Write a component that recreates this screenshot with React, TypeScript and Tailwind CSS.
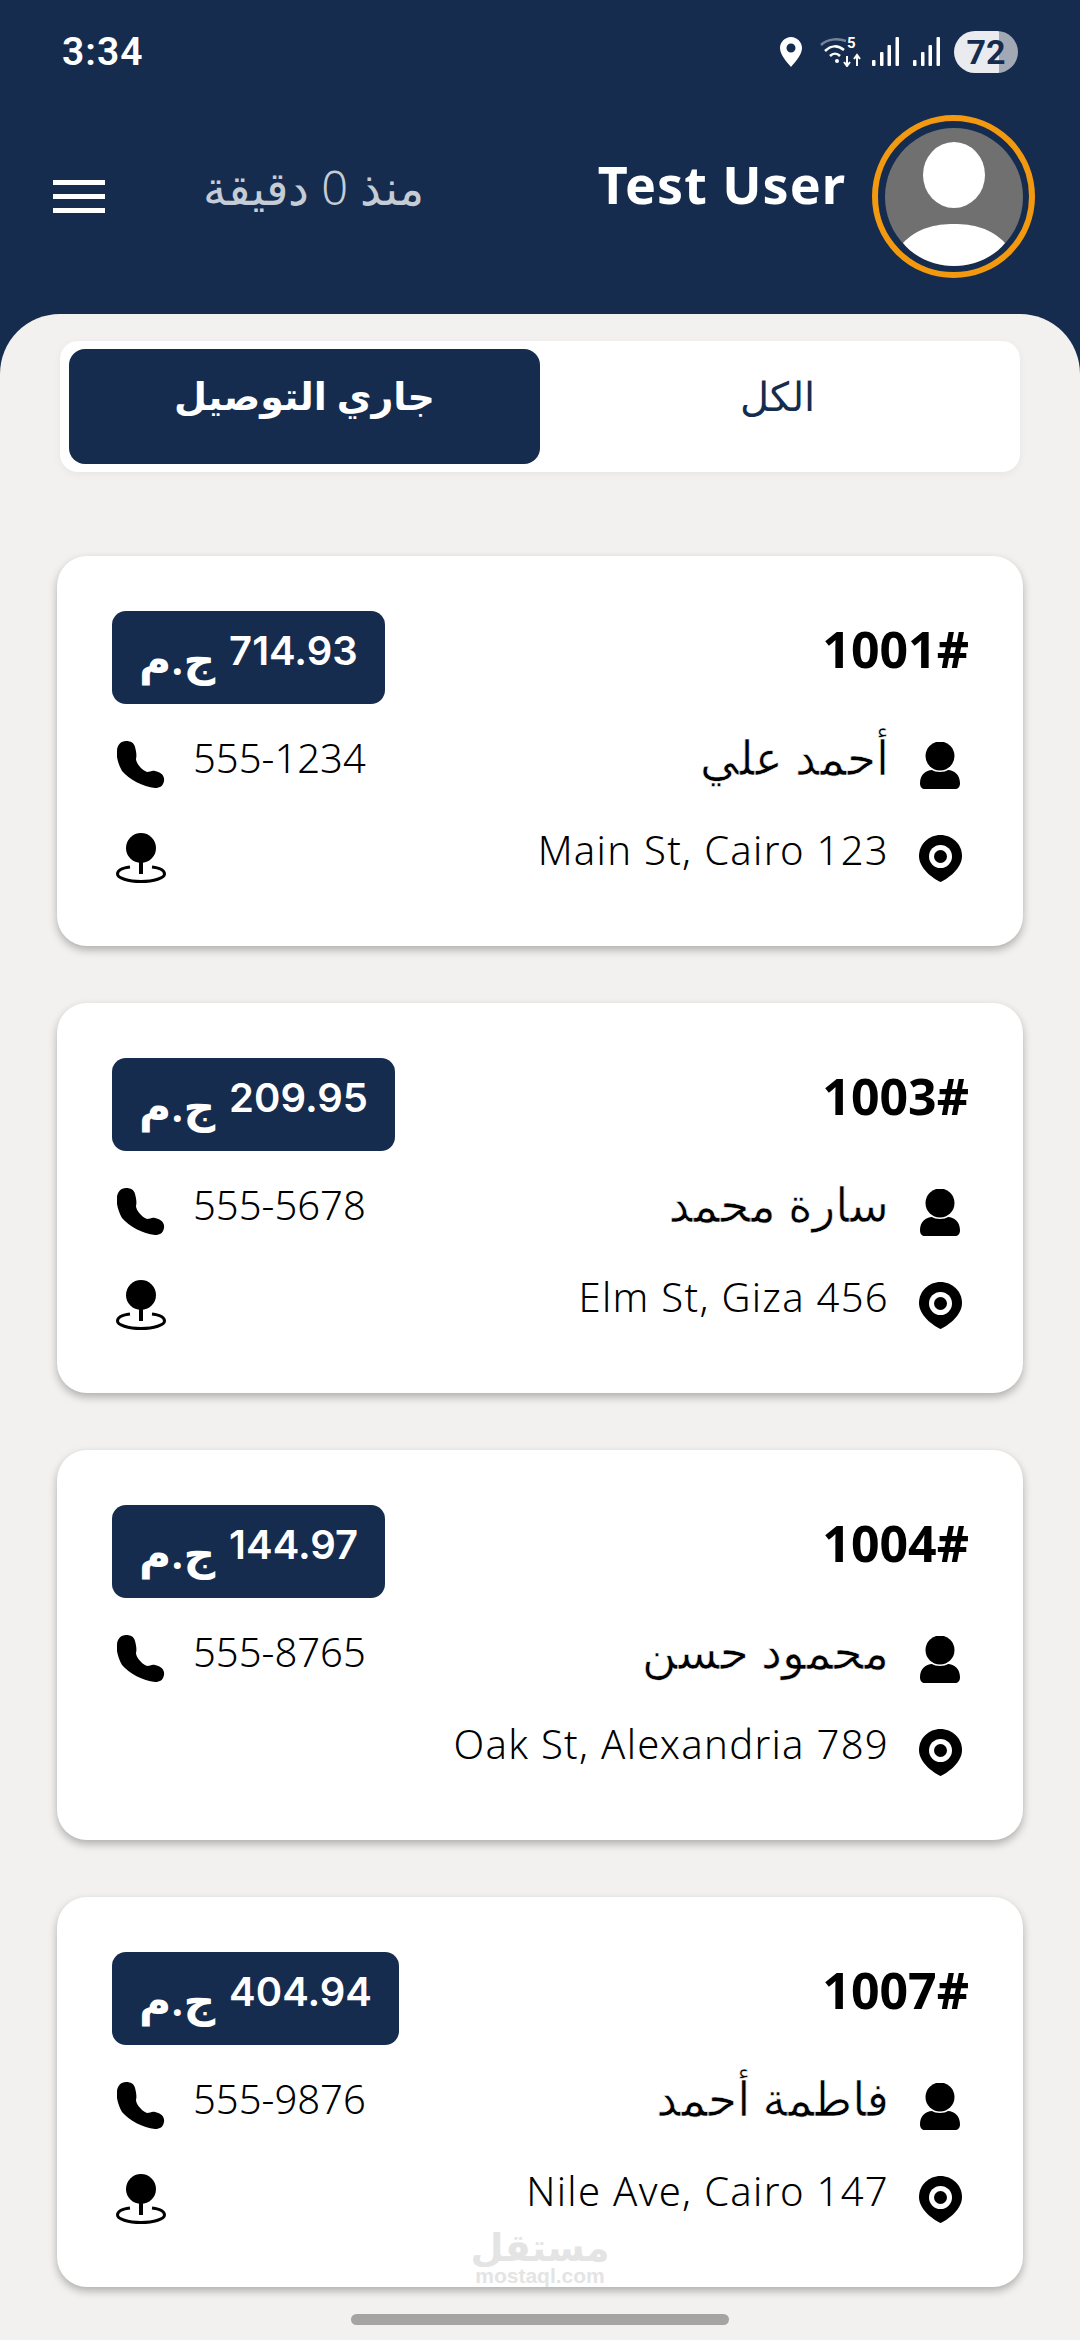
import React from 'react';

type Order = { id: string; amount: string; name: string; phone: string; address: string; pin: boolean };

const orders: Order[] = [
  { id: '1001#', amount: '714.93', name: 'أحمد علي', phone: '555-1234', address: '123 Main St, Cairo', pin: true },
  { id: '1003#', amount: '209.95', name: 'سارة محمد', phone: '555-5678', address: '456 Elm St, Giza', pin: true },
  { id: '1004#', amount: '144.97', name: 'محمود حسن', phone: '555-8765', address: '789 Oak St, Alexandria', pin: false },
  { id: '1007#', amount: '404.94', name: 'فاطمة أحمد', phone: '555-9876', address: '147 Nile Ave, Cairo', pin: true },
];

function PhoneIcon() {
  return (
    <svg width="48" height="48" viewBox="0 0 48 48" className="block">
      <path d="M9 0C14 0 17 2 18 6C19 10 20 14 19 18C19 21 23 28 30 31C33 31 35 29 38 30C43 31 48 34 47 40C46 45 43 47 38 47C26 46 12 38 5 30C1 23 -1 15 0 10C0 4 4 0 9 0Z" fill="#000" />
    </svg>
  );
}

function PersonIcon() {
  return (
    <svg width="40" height="47" viewBox="0 0 40 47" className="block">
      <circle cx="20" cy="14" r="14.5" fill="#000" />
      <path d="M0 41C0 33 6 28 12 28C15 30.5 25 30.5 28 28C34 28 40 33 40 41C40 45 38 47 35 47H5C2 47 0 45 0 41Z" fill="#000" />
    </svg>
  );
}

function MarkerIcon() {
  return (
    <svg width="43" height="47" viewBox="0 0 43 47" className="block">
      <path d="M21.500 0C33 0 43 9 43 21C43 33 30 43 21.500 47C13 43 0 33 0 21C0 9 10 0 21.500 0Z" fill="#000" />
      <circle cx="21.500" cy="21.500" r="11.500" fill="#fff" />
      <circle cx="21.500" cy="21.500" r="6.500" fill="#000" />
    </svg>
  );
}

function PinIcon() {
  return (
    <svg width="50" height="50" viewBox="0 0 50 50" className="block">
      <circle cx="25" cy="15" r="15" fill="#000" />
      <rect x="23" y="26" width="4" height="15" fill="#000" />
      <path d="M14 34C6 35 1.500 37 1.500 41C1.500 45 12 48.500 25 48.500C38 48.500 48.500 45 48.500 41C48.500 37 44 35 36 34" fill="none" stroke="#000" strokeWidth="3" />
    </svg>
  );
}

function SignalIcon({ className }: { className: string }) {
  return (
    <svg width="27" height="30" viewBox="0 0 27 30" className={className}>
      <rect x="0" y="23" width="3.500" height="6" rx="1" fill="#fff" />
      <rect x="8" y="15" width="3.500" height="14" rx="1" fill="#fff" />
      <rect x="15.500" y="8" width="3.500" height="21" rx="1" fill="#fff" />
      <rect x="23.500" y="0" width="3.500" height="29" rx="1" fill="#fff" />
    </svg>
  );
}

function StatusBar() {
  return (
    <div dir="ltr" className="flex items-center justify-between pl-[62px] pr-[62px] pt-[31px] h-[73px]">
      <span className="text-[39px] leading-none font-semibold text-white tracking-[1px] font-['Roboto',sans-serif]">3:34</span>
      <div className="flex items-center">
        <svg width="22" height="30" viewBox="0 0 22 30" className="block">
          <path fillRule="evenodd" d="M11 0C17 0 22 5 22 11C22 18 15 25 11 30C7 25 0 18 0 11C0 5 5 0 11 0ZM11 6.500A4.500 4.500 0 1 0 11 15.500A4.500 4.500 0 1 0 11 6.500Z" fill="#fff" />
        </svg>
        <svg width="42" height="30" viewBox="0 0 42 30" className="block ml-[18px]">
          <path d="M1 8C7 2 17 1 26 4" fill="none" stroke="#76839a" strokeWidth="2.500" />
          <path d="M5 14C11 8 18 8 24 13" fill="none" stroke="#fff" strokeWidth="2.500" />
          <path d="M10 19C13 16 17 16 20 19" fill="none" stroke="#fff" strokeWidth="2.500" />
          <circle cx="17" cy="24" r="2" fill="#fff" />
          <path d="M27 19V28M24 25L27 29L30 25M37 29V19M34 22L37 18L40 22" fill="none" stroke="#fff" strokeWidth="2" />
        </svg>
        <span className="text-[15px] leading-none font-bold text-white font-['Roboto',sans-serif] -ml-[15px] -mt-[18px] w-[15px]">5</span>
        <SignalIcon className="block ml-[10px]" />
        <SignalIcon className="block ml-[14px]" />
        <div className="ml-[14px] h-[42px] w-[64px] rounded-full overflow-hidden flex items-center justify-center bg-[linear-gradient(90deg,#e9ebee_70%,#a3a9b4_70%)]">
          <span className="text-[34px] leading-none font-bold text-[#152c4e] font-['Roboto',sans-serif]">72</span>
        </div>
      </div>
    </div>
  );
}

function Avatar() {
  return (
    <div className="w-[163px] h-[163px] rounded-full border-[6px] border-[#f3990f] flex items-center justify-center shrink-0">
      <svg width="138" height="138" viewBox="0 0 138 138" className="block">
        <circle cx="69" cy="69" r="69" fill="#707070" />
        <ellipse cx="69" cy="47" rx="31" ry="33" fill="#fff" />
        <path d="M18 115C32 100 50 96 69 96C88 96 106 100 120 115C108 130 88 138 69 138C50 138 30 130 18 115Z" fill="#fff" />
      </svg>
    </div>
  );
}

function OrderCard({ order, watermark }: { order: Order; watermark?: boolean }) {
  return (
    <div className="relative h-[390px] bg-white rounded-[30px] shadow-[0_4px_8px_rgba(0,0,0,0.28)] pt-[55px] pr-[56px] pl-[55px]">
      <div className="flex items-center justify-between h-[93px]">
        <span dir="ltr" className="text-[50px] leading-none font-bold text-black -mt-[18px] -mr-[2px]">{order.id}</span>
        <span className="h-[93px] flex items-center gap-[14px] px-[27px] rounded-[14px] bg-[#152c4e] text-white whitespace-nowrap">
          <span className="text-[40px] leading-none font-semibold -mt-[14px] font-['Inter',sans-serif]">{order.amount}</span>
          <span className="text-[44px] leading-none font-semibold">ج.م</span>
        </span>
      </div>
      <div className="flex items-center justify-between h-[48px] mt-[37px]">
        <div className="flex items-center">
          <div className="w-[44px] mr-[5px] flex justify-center shrink-0"><PersonIcon /></div>
          <span className="mr-[29px] text-[47px] leading-none font-normal text-black -mt-[16px] [-webkit-text-stroke:0.6px_white]">{order.name}</span>
        </div>
        <div className="flex items-center ml-[5px]">
          <span className="text-[40px] leading-none font-light text-black -mt-[14px]">{order.phone}</span>
          <div className="mr-[28px] shrink-0"><PhoneIcon /></div>
        </div>
      </div>
      <div className="flex items-center justify-between h-[50px] mt-[44px]">
        <div className="flex items-center">
          <div className="w-[44px] mr-[5px] flex justify-center shrink-0"><MarkerIcon /></div>
          <span className="mr-[29px] text-[40px] leading-none font-light tracking-[1.3px] text-black -mt-[16px]">{order.address}</span>
        </div>
        {order.pin && <div className="ml-[4px]"><PinIcon /></div>}
      </div>
      {watermark && (
        <div dir="ltr" className="absolute inset-0 overflow-hidden rounded-[30px] pointer-events-none">
          <div className="absolute left-[418px] bottom-0 w-[130px] flex flex-col items-center">
            <span className="text-[38px] leading-[38px] font-bold text-[#e4e4e4]">مستقل</span>
            <span className="text-[21px] leading-[22px] font-bold text-[#e4e4e4] font-['Liberation_Sans',sans-serif]">mostaql.com</span>
          </div>
        </div>
      )}
    </div>
  );
}

export default function App() {
  return (
    <div dir="rtl" className="relative h-[2340px] w-[1080px] overflow-hidden bg-[#152c4e] flex flex-col font-['Noto_Sans','DejaVu_Sans',sans-serif]">
      <StatusBar />
      {/* Header */}
      <div className="h-[241px] flex items-start justify-between pr-[45px] pl-[53px] pt-[42px]">
        <div className="flex items-center">
          <Avatar />
          <span dir="ltr" className="mr-[26px] text-[52px] leading-none font-bold text-white tracking-[1px] -mt-[26px]">Test User</span>
        </div>
        <div className="flex items-center h-[163px]">
          <span className="text-[47px] leading-none font-light text-[#c5ccd6] ml-[98px] -mt-[18px]">منذ 0 دقيقة</span>
          <div className="flex flex-col gap-[9px] w-[52px]">
            <div className="h-[5px] bg-white" />
            <div className="h-[5px] bg-white" />
            <div className="h-[5px] bg-white" />
          </div>
        </div>
      </div>
      {/* Sheet */}
      <div className="flex-1 bg-[#f2f1ef] rounded-t-[60px] pt-[27px] px-[57px]">
        <div dir="ltr" className="mx-[3px] h-[131px] bg-white rounded-[18px] shadow-[0_2px_8px_rgba(0,0,0,0.05)] flex items-center pl-[9px] pr-[6px]">
          <button className="w-[471px] h-[115px] rounded-[16px] bg-[#152c4e] text-white text-[38px] font-bold leading-none pb-[24px]">جاري التوصيل</button>
          <button className="flex-1 h-[115px] text-[#152c4e] text-[40px] font-light leading-none pb-[22px]">الكل</button>
        </div>
        <div className="mt-[84px] flex flex-col gap-[57px]">
          {orders.map((o, i) => <OrderCard key={o.id} order={o} watermark={i === 3} />)}
        </div>
      </div>
      <div className="absolute bottom-[15px] left-[351px] w-[378px] h-[11px] rounded-full bg-[#a5a4a2]" />
    </div>
  );
}
